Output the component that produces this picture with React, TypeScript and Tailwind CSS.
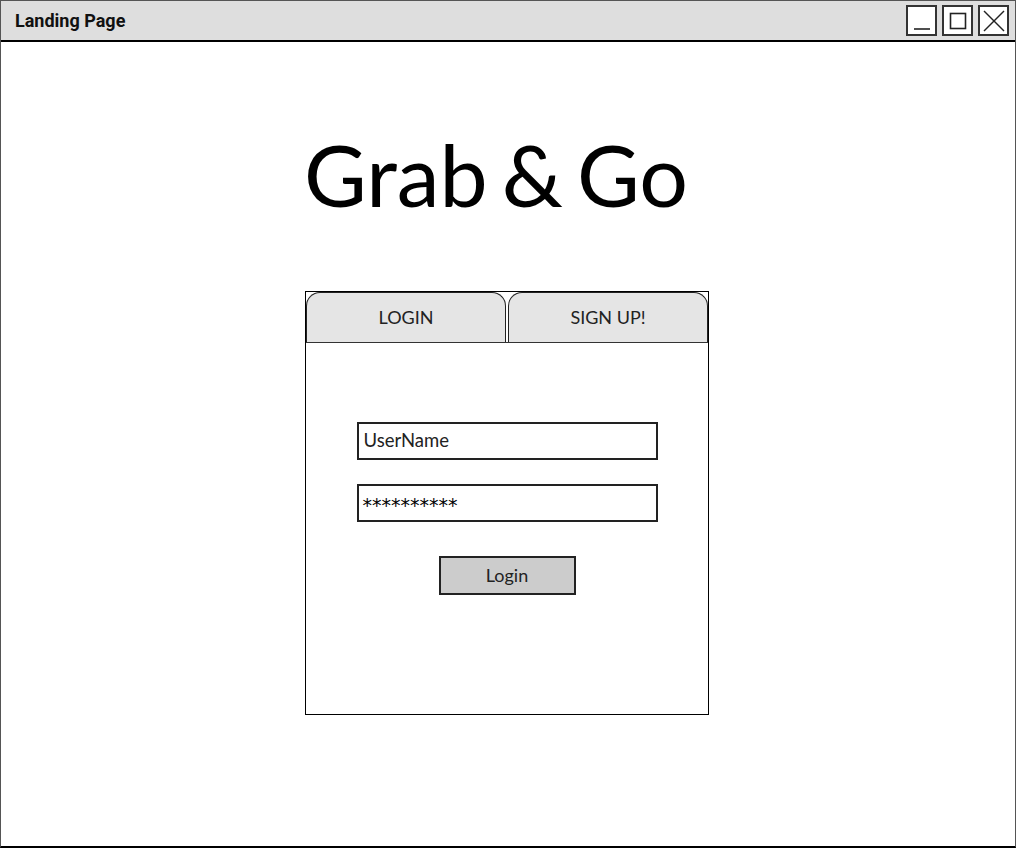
function WindowButton({ children }: { children: React.ReactNode }) {
  return (
    <div className="w-[31px] h-[31px] border-2 border-[#333] bg-white flex items-center justify-center">
      {children}
    </div>
  );
}

export default function App() {
  return (
    <div className="w-[1017px] h-[849px] bg-white">
      <div className="w-[1016px] h-[848px] border border-[#555] border-b-2 border-b-black flex flex-col">
        <div className="h-[41px] bg-[#dedede] border-b-2 border-b-black flex items-center justify-between pl-[14px] pr-[6px]">
          <span className="text-[18px] font-bold text-[#111] font-['Roboto',sans-serif]">
            Landing Page
          </span>
          <div className="flex gap-[5px]">
            <WindowButton>
              <svg width="22" height="22" viewBox="0 0 22 22">
                <line x1="3" y1="19" x2="19" y2="19" stroke="#222" strokeWidth="1.6" />
              </svg>
            </WindowButton>
            <WindowButton>
              <svg width="22" height="22" viewBox="0 0 22 22">
                <rect x="3.5" y="3.5" width="15" height="15" fill="none" stroke="#222" strokeWidth="1.6" />
              </svg>
            </WindowButton>
            <WindowButton>
              <svg width="24" height="24" viewBox="0 0 24 24">
                <line x1="2" y1="2" x2="22" y2="22" stroke="#222" strokeWidth="1.4" />
                <line x1="22" y1="2" x2="2" y2="22" stroke="#222" strokeWidth="1.4" />
              </svg>
            </WindowButton>
          </div>
        </div>

        <div className="flex-1 flex flex-col items-center font-['Lato',sans-serif] text-black">
          <h1 className="mt-[80px] pr-[24px] text-[86px] leading-[104px] font-normal [word-spacing:-8px]">
            Grab &amp; Go
          </h1>

          <div className="mt-[65px] mr-[2px] w-[404px] h-[424px] border-[1.5px] border-black flex flex-col">
            <div className="flex h-[51px] gap-[2px] border-b-[1.5px] border-b-[#333]">
              <div className="flex-1 bg-[#e5e5e5] border-[1.5px] border-b-0 border-[#222] rounded-t-[14px] flex items-center justify-center text-[18px] text-[#222]">
                LOGIN
              </div>
              <div className="flex-1 bg-[#e5e5e5] border-[1.5px] border-b-0 border-[#222] rounded-t-[14px] flex items-center justify-center text-[18px] text-[#222]">
                SIGN UP!
              </div>
            </div>

            <div className="flex flex-col items-center pt-[79px]">
              <div className="w-[301px] h-[38px] border-2 border-[#222] flex items-center pl-[5px] text-[18.5px] text-[#222]">
                UserName
              </div>
              <div className="mt-[24px] w-[301px] h-[38px] border-2 border-[#222] flex items-start pt-[5px] pl-[4px] text-[19px] text-black font-['DejaVu_Sans',sans-serif]">
                **********
              </div>
              <div className="mt-[34px] w-[137px] h-[39px] border-2 border-[#222] bg-[#cccccc] flex items-center justify-center text-[18px] text-[#222]">
                Login
              </div>
            </div>
          </div>
        </div>
      </div>
    </div>
  );
}
